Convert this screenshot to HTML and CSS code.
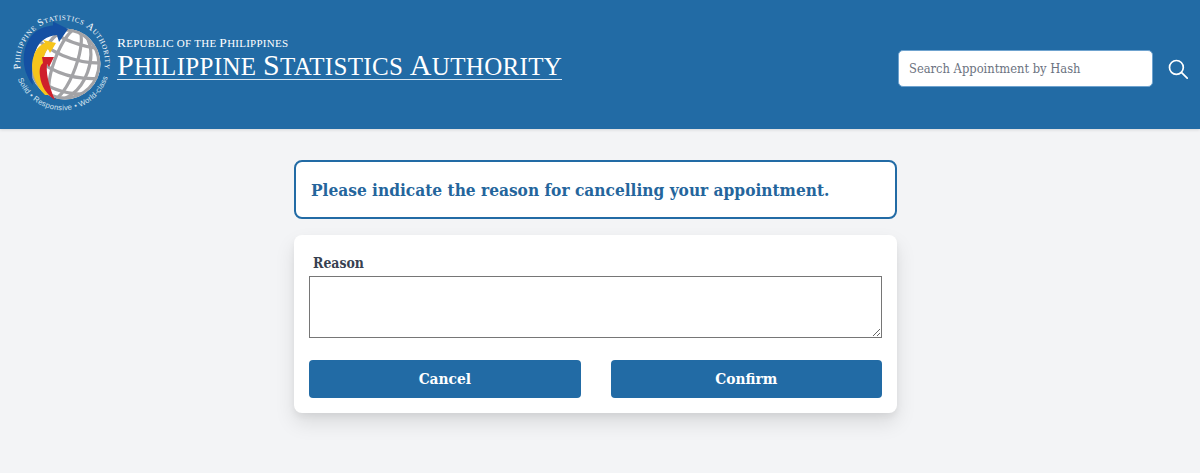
FILE: index.html
```html
<!DOCTYPE html>
<html>
<head>
    <title>Cancel Appointment</title>
    <link rel="stylesheet" href="styles.css">
</head>
<body>
    <header class="site-header">
        <svg class="logo" viewBox="11 9 105 108" width="105" height="108">
            <defs>
                <path id="logo-top" d="M20.5 69 A42.5 42.5 0 1 1 104.5 69"/>
                <path id="logo-bottom" d="M17.5 78 A47.5 47.5 0 0 0 109.8 67"/>
                <clipPath id="globe-clip"><circle cx="65" cy="64" r="35.5"/></clipPath>
            </defs>
            <circle cx="65" cy="64" r="35.5" fill="#fff"/>
            <g clip-path="url(#globe-clip)" fill="none" stroke="#a3a3a6" stroke-width="3.2">
                <circle cx="65" cy="64" r="34"/>
                <g transform="rotate(20 65 64)">
                    <ellipse cx="65" cy="64" rx="11" ry="37"/>
                    <ellipse cx="65" cy="64" rx="24" ry="37"/>
                    <path d="M20 32 Q65 50 110 32"/>
                    <path d="M20 46 Q65 68 110 46"/>
                    <path d="M20 62 Q65 86 110 62"/>
                    <path d="M20 78 Q65 104 110 78"/>
                </g>
            </g>
            <path d="M33 85 C20 69 21 46 34 33 C40 28 47 26 53 25.5 L53 21.5 L68 29 L59 42 L57 35 C47 36 39 41 36 50 C32 60 31 72 33 85 Z" fill="#1450a3"/>
            <path d="M45 95 C34 84 29 68 34 55 C36 49 40 45 45 43 L43 40 L56 43 L50 53 L48 49 C45 52 43 58 43 65 C43 75 46 86 51 95 Z" fill="#f6c51b"/>
            <path d="M55 100 C47 95 41 86 40 76 C39 70 40 65 43 63 L42 57 L54 57 L49 67 L47 64 C46 72 48 84 55 100 Z" fill="#cf1f2b"/>
            <text class="logo-top-text"><textPath href="#logo-top" textLength="146">Philippine Statistics Authority</textPath></text>
            <text class="logo-bottom-text"><textPath href="#logo-bottom" startOffset="1" textLength="118">Solid • Responsive • World-class</textPath></text>
        </svg>
        <div class="brand">
            <div class="brand-small">
                <span class="word">Republic</span> of the <span class="word">Philippines</span>
            </div>
            <div class="brand-name">
                <span class="word">Philippine</span> <span class="word">Statistics</span> <span class="word">Authority</span>
            </div>
        </div>
        <form class="search">
            <input type="text" class="search-input" placeholder="Search Appointment by Hash">
            <svg class="search-icon" viewBox="0 0 20 20" width="20" height="20" fill="none" stroke="#fff" stroke-width="1.7">
                <circle cx="8.4" cy="8.4" r="6.9"/>
                <path d="M13.4 13.4 L19.2 19.2" stroke-linecap="round"/>
            </svg>
        </form>
    </header>

    <main class="content">
        <div class="notice">Please indicate the reason for cancelling your appointment.</div>
        <form class="card">
            <label class="reason-label" for="reason">Reason</label>
            <textarea id="reason" class="reason-input"></textarea>
            <div class="actions">
                <button type="button" class="btn">Cancel</button>
                <button type="submit" class="btn">Confirm</button>
            </div>
        </form>
    </main>
</body>
</html>
```
FILE: styles.css
```css
body {
    margin: 0;
    min-height: 473px;
    background-color: #f3f4f6;
    font-family: "DejaVu Serif Condensed", "DejaVu Serif", serif;
    color: #374151;
}

.site-header {
    display: flex;
    align-items: flex-start;
    height: 129px;
    padding-left: 11px;
    padding-right: 12px;
    box-sizing: border-box;
    background-color: #226ba5;
    box-shadow: 0 1px 3px rgba(0,0,0,0.12);
}

.logo {
    flex: none;
    margin-top: 9px;
}

.logo-top-text {
    font-family: "Liberation Serif", serif;
    font-variant: small-caps;
    font-size: 10px;
    fill: #fff;
}

.logo-bottom-text {
    font-family: "Liberation Sans", sans-serif;
    font-size: 7.6px;
    fill: #d5e3ef;
}

.brand {
    margin-left: 1px;
    margin-top: 34px;
    color: #fff;
    font-family: "Liberation Serif", serif;
    text-transform: uppercase;
}

.word {
    display: inline-block;
}

.brand-small {
    font-size: 11px;
    line-height: 17px;
    letter-spacing: 0.25px;
}

.brand-small .word::first-letter {
    font-size: 13.5px;
}

.brand-name {
    font-size: 25px;
    line-height: 25px;
    letter-spacing: 0.33px;
    border-bottom: 1px solid #d6e4f0;
}

.brand-name .word::first-letter {
    font-size: 30px;
}

.search {
    display: flex;
    align-items: center;
    gap: 15px;
    margin-left: auto;
    margin-top: 50px;
}

.search-input {
    width: 255px;
    height: 37px;
    box-sizing: border-box;
    padding: 0 10px;
    border: 1px solid #6fa3cf;
    border-radius: 5px;
    background: #fff;
    font-family: "DejaVu Serif Condensed", "DejaVu Serif", serif;
    font-size: 12.8px;
}

.search-input::placeholder {
    color: #6b7280;
}

.content {
    width: 603px;
    margin: 31px 0 0 294px;
}

.notice {
    display: flex;
    align-items: center;
    height: 59px;
    box-sizing: border-box;
    padding-left: 15px;
    border: 2px solid #226ba5;
    border-radius: 8px;
    background: #fff;
    color: #24659c;
    font-size: 17.15px;
    font-weight: 700;
}

.card {
    display: flex;
    flex-direction: column;
    height: 178px;
    box-sizing: border-box;
    margin-top: 16px;
    padding: 20px 15px 15px;
    border-radius: 8px;
    background: #fff;
    box-shadow: 0 10px 20px rgba(0,0,0,0.1), 0 4px 6px rgba(0,0,0,0.05);
}

.reason-label {
    margin-left: 4px;
    font-size: 13.9px;
    line-height: 16px;
    font-weight: 700;
}

.reason-input {
    display: block;
    height: 62px;
    box-sizing: border-box;
    margin: 5px 0 0;
    border: 1px solid #767676;
}

.actions {
    display: grid;
    grid-template-columns: 1fr 1fr;
    gap: 30px;
    margin-top: 22px;
}

.btn {
    height: 38px;
    border: none;
    border-radius: 4px;
    background: #226ba5;
    color: #fff;
    font-family: "DejaVu Serif Condensed", "DejaVu Serif", serif;
    font-size: 15.3px;
    font-weight: 700;
}
```
